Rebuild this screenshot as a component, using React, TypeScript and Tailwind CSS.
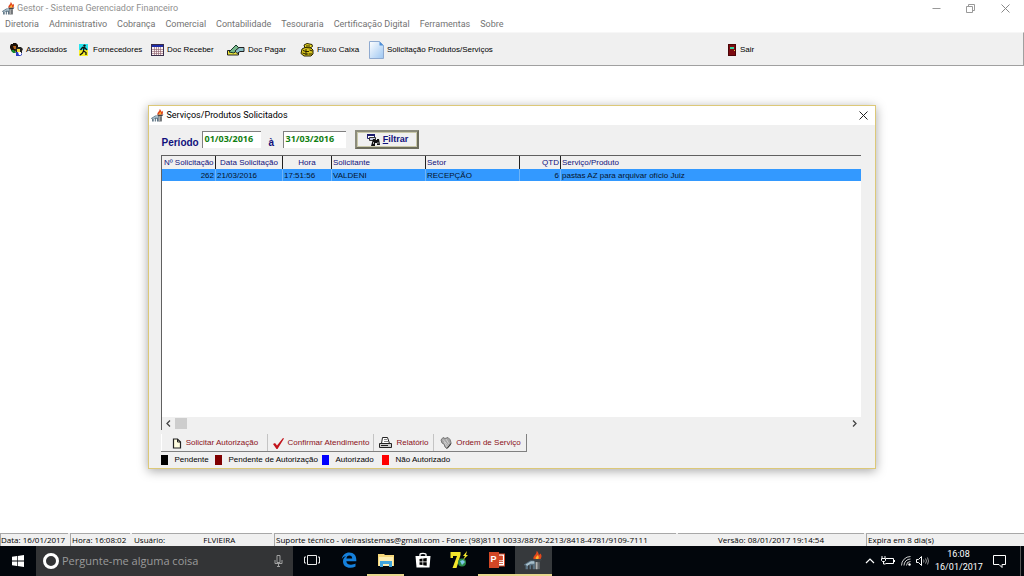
import React from 'react';

const SEGOE = "font-['Open_Sans','Noto_Sans',sans-serif]";
const UI = "font-['Roboto','Noto_Sans',sans-serif]";
const SANS = "font-['Liberation_Sans',Arial,sans-serif]";

type IconProps = { className?: string };

const GestorIcon: React.FC<IconProps> = ({ className }) => (
  <svg className={className} viewBox="0 0 24 24" aria-hidden="true">
    <path d="M0 17l8-5h6v11h-3v-5H9v5H7v-5H5v5H2v-5H0z" fill="#5b7283" />
    <path d="M2 17l7-4h4v3H8l-4 3z" fill="#a9c0cc" />
    <path d="M11 10h12l-3 4h-6z" fill="#3f4448" />
    <path d="M14 14h6v9h-6z" fill="#63676a" />
    <path d="M15 14h2v9h-2z" fill="#b5b5b5" />
    <path d="M12 10c-1-4 4-5 4-10 3 2 2 4 3 5l2-2c2 3 1 5 0 7z" fill="#e2481d" />
    <path d="M15 10c-1-3 2-3 2-5 2 2 2 3 1 5z" fill="#ffb52e" />
  </svg>
);

const PeopleIcon: React.FC<IconProps> = ({ className }) => (
  <svg className={className} viewBox="0 0 13 13" aria-hidden="true">
    <path d="M1 1h2V0h3l2 2v4H6L5 9H2L1 7 0 5V3z" fill="#1c1208" />
    <path d="M3 3h3v3H4z" fill="#b9671f" />
    <path d="M1 7h3l2 3H3z" fill="#128a2e" />
    <path d="M7 4h4l2 2-1 2v2H6L5 7z" fill="#222" />
    <path d="M7 6h3v3H7z" fill="#f4dc3c" />
    <path d="M6 9h5l1 3-2 1H6z" fill="#2b3ec7" />
    <path d="M8 9h3v3H9z" fill="#fff" />
  </svg>
);

const RunnerIcon: React.FC<IconProps> = ({ className }) => (
  <svg className={className} viewBox="0 0 9 12" aria-hidden="true">
    <path d="M0 0h9v6H0z" fill="#27e4ee" />
    <path d="M0 6h9v6H0z" fill="#f7ef2a" />
    <circle cx="5.500" cy="1.600" r="1.200" fill="#111" />
    <path d="M5 3L4.500 7 7 8.500V11M4.500 7L3.500 9 1 11M1.500 6l2-2.500h2L8 6" stroke="#111" strokeWidth="1.300" fill="none" />
  </svg>
);

const CalendarIcon: React.FC<IconProps> = ({ className }) => (
  <svg className={className} viewBox="0 0 13 12" aria-hidden="true">
    <path d="M0 0h13v12H0z" fill="#3a2d4a" />
    <path d="M1 1h11v2H1z" fill="#1c2ca8" />
    <path d="M1 3h11v8H1z" fill="#fbf3f3" />
    <path d="M1 5.500h11M1 7.500h11M1 9.500h11M3.500 3v8M5.500 3v8M7.500 3v8M9.500 3v8" stroke="#8a5a68" strokeWidth="0.600" />
  </svg>
);

const PayIcon: React.FC<IconProps> = ({ className }) => (
  <svg className={className} viewBox="0 0 18 12" aria-hidden="true">
    <path d="M0.500 6.500h10l1 1.500v3H0.500z" fill="#f0e53a" stroke="#222" />
    <path d="M2 8l7-7 3 3-5 5z" fill="#79b98b" stroke="#16382a" />
    <path d="M8 7l4-3.500h5v4h-4l-3 2z" fill="#8fc3c9" stroke="#222" />
  </svg>
);

const CoinsIcon: React.FC<IconProps> = ({ className }) => (
  <svg className={className} viewBox="0 0 14 14" aria-hidden="true">
    <path d="M4 2l3-1.500 5 1 0.500 2L10 5H5z" fill="#e8d822" stroke="#2b2500" />
    <path d="M2 6l3-1.500 6 0.500 2 2v4l-2 2H4L1 10.500z" fill="#d8c51e" stroke="#2b2500" />
    <path d="M3 7.500l3 1h3M2.500 10l3 1h3M9.500 7l3 1M9 11h3M6 3h4M6 6v6" stroke="#2b2500" fill="none" />
  </svg>
);

const PageIcon: React.FC<IconProps> = ({ className }) => (
  <svg className={className} viewBox="0 0 15 18" aria-hidden="true">
    <defs>
      <linearGradient id="page" x1="1" y1="1" x2="0" y2="0">
        <stop offset="0" stopColor="#9cc6f2" />
        <stop offset="1" stopColor="#fff" />
      </linearGradient>
    </defs>
    <path d="M0.500 0.500h10l4 4v13h-14z" fill="url(#page)" stroke="#8faad0" />
    <path d="M10.500 0.500v4h4z" fill="#4f8fd8" />
  </svg>
);

const DoorIcon: React.FC<IconProps> = ({ className }) => (
  <svg className={className} viewBox="0 0 8 12" aria-hidden="true">
    <path d="M0 0h8v12H0z" fill="#4a0508" />
    <path d="M1 1h6v10H1z" fill="#7d0a10" />
    <path d="M2 3h4v2H2z" fill="#34d6a0" />
    <path d="M6 6h1v1H6z" fill="#e8c64a" />
  </svg>
);

const FilterIcon: React.FC<IconProps> = ({ className }) => (
  <svg className={className} viewBox="0 0 13 12" aria-hidden="true">
    <path d="M0.500 0.500h7v4h-7z" fill="#fff" stroke="#1b1b6e" />
    <path d="M0 0h8v2H0z" fill="#1b1b6e" />
    <path d="M2.500 3.500h6v3h-6z" fill="#c9d0e8" stroke="#333" />
    <path d="M6 5h2v1h2V5h2l1 6h-3V9H8v3H4z" fill="#111" />
    <path d="M6.500 8v2M11 8v2" stroke="#aaa" />
  </svg>
);

const NewDocIcon: React.FC<IconProps> = ({ className }) => (
  <svg className={className} viewBox="0 0 10 11" aria-hidden="true">
    <path d="M1.500 1h4L8.500 4v6h-7z" fill="#fffde0" stroke="#222" strokeWidth="1.200" />
    <path d="M5.500 1v3h3" fill="none" stroke="#222" />
  </svg>
);

const CheckIcon: React.FC<IconProps> = ({ className }) => (
  <svg className={className} viewBox="0 0 11 11" aria-hidden="true">
    <path d="M0 6l2-1 2 2.500L10 0l1 0.500L4.500 11h-1z" fill="#c3141c" />
  </svg>
);

const PrinterIcon: React.FC<IconProps> = ({ className }) => (
  <svg className={className} viewBox="0 0 13 12" aria-hidden="true">
    <path d="M2.500 6.500l1-6h5l2 6z" fill="#fff" stroke="#222" />
    <path d="M5 2.500h3M5 4.500h4" stroke="#555" strokeWidth="0.700" />
    <path d="M0.500 6.500h12v4h-12z" fill="#cfcfcf" stroke="#222" />
    <path d="M2 8.500h7" stroke="#222" />
  </svg>
);

const OrderIcon: React.FC<IconProps> = ({ className }) => (
  <svg className={className} viewBox="0 0 12 12" aria-hidden="true">
    <path d="M1 3l2-2.500 2 1 3-1 2 2 1 3-1 3-3 3-2-1.500-1-3-2-1z" fill="#a5a5a5" stroke="#777" />
    <path d="M3 2.500l5 6M6 2l3 5M4 5l3 5" stroke="#e0e0e0" strokeWidth="0.700" />
    <path d="M7 11.500l4-5" stroke="#333" />
  </svg>
);

const menus = [
  'Diretoria',
  'Administrativo',
  'Cobrança',
  'Comercial',
  'Contabilidade',
  'Tesouraria',
  'Certificação Digital',
  'Ferramentas',
  'Sobre',
];

const tools = [
  { label: 'Associados', width: 'w-[67px]', icon: <PeopleIcon className="h-[13px] w-[13px]" /> },
  { label: 'Fornecedores', width: 'w-[74px]', icon: <RunnerIcon className="mx-[2px] h-[12px] w-[9px]" /> },
  { label: 'Doc Receber', width: 'w-[76px]', icon: <CalendarIcon className="h-[12px] w-[13px]" /> },
  { label: 'Doc Pagar', width: 'w-[73px]', icon: <PayIcon className="h-[12px] w-[18px]" /> },
  { label: 'Fluxo Caixa', width: 'w-[69px]', icon: <CoinsIcon className="h-[14px] w-[14px]" /> },
  { label: 'Solicitação Produtos/Serviços', width: 'w-[359px]', icon: <PageIcon className="h-[18px] w-[15px]" /> },
  { label: 'Sair', width: 'w-[40px]', icon: <DoorIcon className="mr-px h-[12px] w-[8px]" /> },
];

const TitleBar: React.FC = () => (
  <div className="flex h-4 items-center pr-px pl-[2px] text-[#8f8f8f]">
    <GestorIcon className="h-[13px] w-[13px]" />
    <h1 className="ml-[2px] flex-1 pt-px text-[9px]">Gestor - Sistema Gerenciador Financeiro</h1>
    <div className="flex items-center">
      <button type="button" aria-label="Minimizar" className="flex h-4 w-[34px] items-center justify-center">
        <svg className="h-[9px] w-[9px]" viewBox="0 0 9 9"><path d="M0.500 4.500h8" stroke="#999" /></svg>
      </button>
      <button type="button" aria-label="Restaurar" className="flex h-4 w-[34px] items-center justify-center">
        <svg className="h-[9px] w-[9px]" viewBox="0 0 9 9">
          <path d="M0.500 2.500h6v6h-6zM2.500 2.500v-2h6v6h-2" fill="none" stroke="#999" />
        </svg>
      </button>
      <button type="button" aria-label="Fechar" className="flex h-4 w-[36px] items-center justify-center">
        <svg className="h-[9px] w-[9px]" viewBox="0 0 9 9"><path d="M0.500 0.500l8 8M8.500 0.500l-8 8" stroke="#888" /></svg>
      </button>
    </div>
  </div>
);

const MenuBar: React.FC = () => (
  <nav className="flex h-4 items-center gap-[10px] pt-px pl-[5px] text-[9px] text-[#737373]">
    {menus.map((item) => (
      <button key={item} type="button" className="whitespace-nowrap">
        {item}
      </button>
    ))}
  </nav>
);

const Toolbar: React.FC = () => (
  <div
    className={`flex h-[34px] items-center border-t border-r border-b border-[#a0a0a0] border-t-[#f7f7f7] bg-[#f0f0f0] pt-px pl-[10px] text-[8px] text-black ${SANS}`}
  >
    {tools.map((tool) => (
      <button
        key={tool.label}
        type="button"
        className={`flex shrink-0 items-center gap-[3px] whitespace-nowrap ${tool.width}`}
      >
        <span className="shrink-0">{tool.icon}</span>
        {tool.label}
      </button>
    ))}
  </div>
);

const FilterRow: React.FC = () => (
  <form className={`flex h-[30px] items-center pb-px text-[10px] font-bold text-[#10107c] ${SANS}`}>
    <label htmlFor="from" className="w-[41px] pt-[6px]">
      Período
    </label>
    <input
      id="from"
      defaultValue="01/03/2016"
      className={`h-[17px] w-[59px] border-t border-l border-[#808080] bg-white pb-[3px] pl-px text-[9px] text-[#118011] ${SEGOE}`}
    />
    <label htmlFor="to" className="w-[22px] pt-[6px] pl-[7px]">
      à
    </label>
    <input
      id="to"
      defaultValue="31/03/2016"
      className={`h-[17px] w-[63px] border-t border-l border-[#808080] bg-white pb-[3px] pl-px text-[9px] text-[#118011] ${SEGOE}`}
    />
    <button
      type="button"
      className="ml-[9px] flex h-[19px] w-[64px] items-center justify-center gap-[3px] border-2 border-t-[#8c8c7c] border-r-[#6c6c5c] border-b-[#6c6c5c] border-l-[#8c8c7c] bg-[#f0f0f0] text-[9px] inset-ring inset-ring-[#c9c8a8]"
    >
      <FilterIcon className="h-[12px] w-[13px]" />
      <span>
        <u>F</u>iltrar
      </span>
    </button>
  </form>
);

const RequestTable: React.FC = () => (
  <div className="flex flex-1 flex-col border-t border-l border-[#606060] bg-white">
    <table className="w-full table-fixed border-collapse text-[8px] leading-[11px]">
      <colgroup>
        <col className="w-[53px]" />
        <col className="w-[67px]" />
        <col className="w-[49px]" />
        <col className="w-[94px]" />
        <col className="w-[94px]" />
        <col className="w-[41px]" />
        <col />
      </colgroup>
      <thead>
        <tr className="h-[13px] bg-[#f0f0f0] whitespace-nowrap text-[#10107c] [&>th]:p-0 [&>th]:px-px [&>th]:font-normal [&>th:not(:last-child)]:border-r [&>th]:border-[#202020]">
          <th>Nº Solicitação</th>
          <th>Data Solicitação</th>
          <th>Hora</th>
          <th className="text-left">Solicitante</th>
          <th className="text-left">Setor</th>
          <th className="text-right">QTD</th>
          <th className="text-left">Serviço/Produto</th>
        </tr>
      </thead>
      <tbody>
        <tr className="h-[12px] bg-[#3399ff] whitespace-nowrap text-[#06142c] [&>td]:p-0 [&>td]:px-px [&>td:not(:last-child)]:border-r [&>td]:border-[#6db4f8]">
          <td className="text-right">262</td>
          <td>21/03/2016</td>
          <td>17:51:56</td>
          <td>VALDENI</td>
          <td>RECEPÇÃO</td>
          <td className="text-right">6</td>
          <td>pastas AZ para arquivar ofício Juiz</td>
        </tr>
      </tbody>
    </table>
    <div className="mt-auto flex h-[13px] items-center bg-[#f0f0f0] px-[3px]">
      <button type="button" aria-label="Rolar para a esquerda">
        <svg className="h-[7px] w-[7px]" viewBox="0 0 7 7"><path d="M5 0.500L2 3.500l3 3" fill="none" stroke="#444" strokeWidth="1.300" /></svg>
      </button>
      <div className="ml-[3px] h-[11px] w-[12px] bg-[#cdcdcd]" />
      <button type="button" aria-label="Rolar para a direita" className="ml-auto">
        <svg className="h-[7px] w-[7px]" viewBox="0 0 7 7"><path d="M2 0.500l3 3-3 3" fill="none" stroke="#444" strokeWidth="1.300" /></svg>
      </button>
    </div>
  </div>
);

const actions = [
  { label: 'Solicitar Autorização', width: 'w-[106px]', icon: <NewDocIcon className="h-[11px] w-[10px]" /> },
  { label: 'Confirmar Atendimento', width: 'w-[106px]', icon: <CheckIcon className="h-[11px] w-[11px]" /> },
  { label: 'Relatório', width: 'w-[60px]', icon: <PrinterIcon className="h-[12px] w-[13px]" /> },
  { label: 'Ordem de Serviço', width: 'w-[93px]', icon: <OrderIcon className="h-[12px] w-[12px]" /> },
];

const legend = [
  { label: 'Pendente', width: 'w-[54px]', color: 'bg-black' },
  { label: 'Pendente de Autorização', width: 'w-[107px]', color: 'bg-[#800000]' },
  { label: 'Autorizado', width: 'w-[60px]', color: 'bg-[#0000ff]' },
  { label: 'Não Autorizado', width: 'w-[80px]', color: 'bg-[#ff0000]' },
];

const RequestsDialog: React.FC = () => (
  <section
    role="dialog"
    aria-labelledby="dialog-title"
    className="flex w-[71%] flex-col border border-[#dcc878] bg-[#f0f0f0] shadow-[0_2px_10px_rgba(0,0,0,0.35)]"
  >
    <header className="flex h-[19px] items-center bg-white pr-[7px] pl-[2px]">
      <GestorIcon className="h-[13px] w-[13px]" />
      <h2 id="dialog-title" className="ml-[2px] flex-1 text-[9px] text-black">
        Serviços/Produtos Solicitados
      </h2>
      <button type="button" aria-label="Fechar">
        <svg className="h-[9px] w-[9px]" viewBox="0 0 9 9"><path d="M0.500 0.500l8 8M8.500 0.500l-8 8" stroke="#222" /></svg>
      </button>
    </header>
    <div className={`flex flex-1 flex-col pr-[14px] pb-[2px] pl-[12px] ${SANS}`}>
      <FilterRow />
      <RequestTable />
      <div className="mt-[4px] flex h-[18px] self-start border-r border-b border-[#808080] text-[8px] text-[#8b1020]">
        {actions.map((action) => (
          <button
            key={action.label}
            type="button"
            className={`flex items-center justify-center gap-[4px] border-l border-l-[#c4c4c4] pt-px whitespace-nowrap first:border-l-white ${action.width}`}
          >
            <span className="shrink-0">{action.icon}</span>
            {action.label}
          </button>
        ))}
      </div>
      <ul className="flex h-[14px] items-center pt-px text-[8px] text-black">
        {legend.map((item) => (
          <li key={item.label} className={`flex items-center gap-[6px] whitespace-nowrap ${item.width}`}>
            <span className={`h-[10px] w-[7px] shrink-0 ${item.color}`} />
            {item.label}
          </li>
        ))}
      </ul>
    </div>
  </section>
);

const StatusBar: React.FC = () => (
  <footer
    className={`flex h-[13px] items-center gap-[2px] bg-[#f0f0f0] text-[8px] whitespace-nowrap text-black [&>span]:h-full [&>span]:border-t [&>span]:border-l [&>span]:border-[#a8a8a8] [&>span]:leading-[12px] ${SEGOE}`}
  >
    <span className="w-[68px]">Data: 16/01/2017</span>
    <span className="w-[60px] pl-px">Hora: 16:08:02</span>
    <span className="w-[140px] border-l-0! pl-[2px]">
      Usuário: <b className="ml-[36px] font-normal">FLVIEIRA</b>
    </span>
    <span className="w-[402px] pl-px">
      Suporte técnico - vieirasistemas@gmail.com - Fone: (98)8111 0033/8876-2213/8418-4781/9109-7111
    </span>
    <span className="w-[186px] border-l-0! text-center">Versão: 08/01/2017 19:14:54</span>
    <span className="flex-1 pl-px">Expira em 8 dia(s)</span>
  </footer>
);

const EdgeIcon: React.FC = () => (
  <svg className="h-[16px] w-[16px]" viewBox="0 0 16 16">
    <path
      d="M0.800 7C1.500 3 4.500 0.500 8.300 0.500c4.500 0 7 3 7 7.300v1.400H5.300c0.200 2.500 2.200 3.500 4.700 3.500 1.700 0 3.200-0.500 4.500-1.200v3c-1.500 0.800-3.300 1.200-5.300 1.200-4.400 0-7.200-2.500-7.200-6.300 0-2.400 1.300-4.300 3.200-5.300C3 4.600 1.700 5.600 0.800 7zM5.400 6.500h5.800c0-1.800-1-2.900-2.800-2.900-1.700 0-2.700 1.100-3 2.900z"
      fill="#1580dc"
    />
  </svg>
);

const FolderIcon: React.FC = () => (
  <svg className="h-[14px] w-[16px]" viewBox="0 0 16 14">
    <path d="M0 1h6l1 1h9v11H0z" fill="#f5d77a" />
    <path d="M1 4h14v9H1z" fill="#fdeeb3" />
    <path d="M2 8h12v6h-3v-3H5v3H2z" fill="#41a5dc" />
  </svg>
);

const StoreIcon: React.FC = () => (
  <svg className="h-[16px] w-[16px]" viewBox="0 0 16 16">
    <path d="M5 4V2.500C5 1 11 1 11 2.500V4" fill="none" stroke="#fff" strokeWidth="1.300" />
    <path d="M0.500 4h15L14.500 15.500h-13z" fill="#fff" />
    <path d="M4.500 7l3-0.400v2.900h-3zM8.200 6.500l3.500-0.500v3.500H8.200zM4.500 10.200h3v2.900l-3-0.400zM8.200 10.200h3.500v3.500l-3.500-0.500z" fill="#000" />
  </svg>
);

const SevenIcon: React.FC = () => (
  <svg className="h-[18px] w-[19px]" viewBox="0 0 19 18">
    <path d="M0.500 1h10v3L6.500 17h-4L7 5H3v2H0.500z" fill="#f4e62c" />
    <circle cx="12" cy="11.500" r="4" fill="#2d8a4a" />
    <path d="M10 10l3-1 2 2-3 3z" fill="#7ec8e8" />
    <path d="M17 0l-4 5h2l-2 4 5-5h-2z" fill="#f4e62c" />
  </svg>
);

const PowerPointIcon: React.FC = () => (
  <span className="flex h-[16px] w-[16px]">
    <span className={`flex w-[10px] items-center justify-center bg-[#d24726] text-[9px] font-bold text-white ${SANS}`}>P</span>
    <svg className="h-[16px] w-[6px]" viewBox="0 0 6 16">
      <path d="M0 1.500h6v13H0z" fill="#d24726" />
      <path d="M0 2.500h5v11H0z" fill="#fff" />
      <path d="M0 4h3.500v4H0zM0 9.500h4M0 11.500h4" fill="#d24726" stroke="#d24726" strokeWidth="0.800" />
    </svg>
  </span>
);

const TaskViewIcon: React.FC = () => (
  <svg className="h-[12px] w-[16px]" viewBox="0 0 16 12">
    <path d="M3.500 1.500h9v9h-9zM2 3H0.500v6H2M14 3h1.500v6H14" fill="none" stroke="#e8e8e8" />
  </svg>
);

const apps = [
  { name: 'Visão de tarefas', icon: <TaskViewIcon />, state: '' },
  { name: 'Edge', icon: <EdgeIcon />, state: '' },
  { name: 'Explorador de Arquivos', icon: <FolderIcon />, state: 'border-[#e6d68c]' },
  { name: 'Loja', icon: <StoreIcon />, state: '' },
  { name: 'Seven', icon: <SevenIcon />, state: '' },
  { name: 'PowerPoint', icon: <PowerPointIcon />, state: 'border-[#e6d68c]' },
  { name: 'Gestor', icon: <GestorIcon className="h-[19px] w-[19px]" />, state: 'border-[#e6d68c] bg-[#36393c]' },
];

const Taskbar: React.FC = () => (
  <div className={`flex h-[30px] items-stretch bg-[#02060c] text-white ${SEGOE}`}>
    <button type="button" aria-label="Iniciar" className="flex w-[36px] items-center justify-center">
      <svg className="h-[12px] w-[12px]" viewBox="0 0 12 12">
        <path d="M0 1.700l5-0.700v4.600H0zM5.700 0.900L12 0v5.600H5.700zM0 6.400h5V11l-5-0.700zM5.700 6.400H12V12l-6.300-0.900z" fill="#fff" />
      </svg>
    </button>
    <label className="flex w-[257px] items-center gap-[3px] bg-[#333436] pr-[10px] pl-[7px]">
      <span className="h-[16px] w-[16px] shrink-0 rounded-full border-[3px] border-white" />
      <input
        aria-label="Pesquisar"
        placeholder="Pergunte-me alguma coisa"
        className="min-w-0 flex-1 text-[11px] placeholder:text-[#9a9a9a]"
      />
      <svg className="h-[12px] w-[9px]" viewBox="0 0 9 12">
        <path d="M3 0.500h3v7H3zM1 5v3.500h7V5M4.500 8.500v3M3 11.500h3" fill="none" stroke="#a0a0a0" />
      </svg>
    </label>
    <div className="flex">
      {apps.map((app) => (
        <button
          key={app.name}
          type="button"
          aria-label={app.name}
          className={`flex w-[37px] items-center justify-center border-b-2 ${app.state || 'border-transparent'}`}
        >
          {app.icon}
        </button>
      ))}
    </div>
    <div className="ml-auto flex items-center">
      <svg className="h-[8px] w-[10px]" viewBox="0 0 10 8"><path d="M1 6l4-4 4 4" fill="none" stroke="#fff" strokeWidth="1.200" /></svg>
      <svg className="ml-[6px] h-[10px] w-[14px]" viewBox="0 0 14 10">
        <path d="M5 2.500h7.500v5h-8M13.500 4v2M1 0v2M4 0v2M0.500 2.500h4v2l-1 1h-2l-1-1zM2.500 6v2h2" fill="none" stroke="#fff" />
      </svg>
      <svg className="ml-[6px] h-[10px] w-[10px]" viewBox="0 0 10 10">
        <path d="M0.500 9.500a9 9 0 0 1 9-9M3 9.500a6.500 6.500 0 0 1 6.500-6.500M5.500 9.500a4 4 0 0 1 4-4" fill="none" stroke="#ccc" />
        <circle cx="8.500" cy="8.500" r="1.200" fill="#fff" />
      </svg>
      <svg className="ml-[5px] h-[10px] w-[13px]" viewBox="0 0 13 10">
        <path d="M0.500 3.500h2l3-3v9l-3-3h-2z" fill="none" stroke="#fff" />
        <path d="M7.500 3.500q1 1.500 0 3M9.500 2.500q2 2.500 0 5M11.500 1.500q2 3.500 0 7" fill="none" stroke="#bbb" strokeWidth="0.800" />
      </svg>
      <time className={`ml-[6px] w-[47px] text-center text-[9px] leading-[13px] ${UI}`}>
        16:08
        <br />
        16/01/2017
      </time>
      <button type="button" aria-label="Notificações" className="ml-[11px]">
        <svg className="h-[13px] w-[13px]" viewBox="0 0 13 13">
          <path d="M0.500 0.500h12v9H9v3l-3-3H0.500z" fill="none" stroke="#fff" />
        </svg>
      </button>
      <span className="ml-[14px] h-full w-[4px] border-l border-[#555]" />
    </div>
  </div>
);

const App: React.FC = () => (
  <div className={`flex min-h-screen flex-col bg-white ${UI}`}>
    <TitleBar />
    <MenuBar />
    <Toolbar />
    <main className="flex flex-1 justify-center pt-[39px] pb-[64px]">
      <RequestsDialog />
    </main>
    <StatusBar />
    <Taskbar />
  </div>
);

export default App;
